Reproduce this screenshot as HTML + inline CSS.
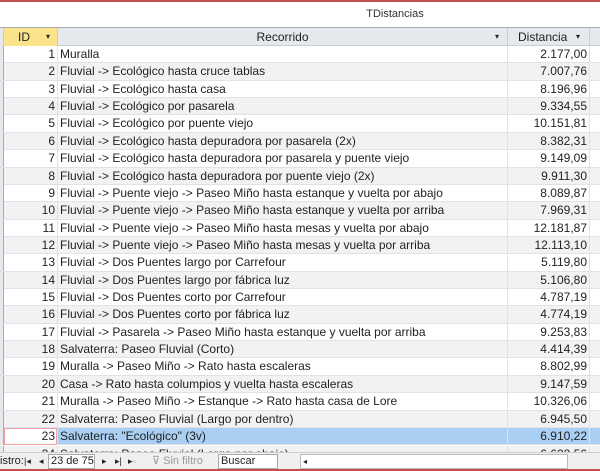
<!DOCTYPE html>
<html><head><meta charset="utf-8"><style>
*{margin:0;padding:0;box-sizing:border-box}
body{width:600px;height:471px;overflow:hidden;background:#fff;font-family:"Liberation Sans",sans-serif;font-size:12px;color:#222;position:relative}
.top{position:absolute;left:0;top:0;width:600px;height:2px;background:#c0504d}
.title{position:absolute;left:0;width:600px;top:8px;text-align:center;padding-left:190px;font-size:11px;color:#333}
.hdr{position:absolute;top:27px;left:0;width:600px;height:19px;background:#e5e8ed;border-top:1px solid #a9adb3;border-bottom:1px solid #c9ced6}
.hdr div{position:absolute;top:0;height:18px;line-height:18px;border-right:1px solid #c9ced6}
.row{position:absolute;left:0;width:600px;height:17.36px;border-bottom:1px solid #dde3ea}
.row div{position:absolute;top:0;height:17px;line-height:17px;white-space:nowrap;overflow:hidden}
.sel{position:absolute;left:0;width:4px;height:17px;background:#e5e8ed;border-right:1px solid #a9adb3}
.id{left:4px;width:54px;text-align:right;padding-right:2px;border-right:1px solid #dde3ea}
.rc{left:58px;width:450px;padding-left:2px;border-right:1px solid #dde3ea}
.ds{left:508px;width:82px;text-align:right;padding-right:2px;border-right:1px solid #dde3ea}
.alt{background:#f2f2f2}
.nav{position:absolute;top:452px;left:0;width:600px;height:17px;background:#f0f0f0;border-top:1px solid #c9ced6;font-size:11px}
.nav span{position:absolute;top:2px;white-space:nowrap;line-height:13px}
.box{top:1px !important;height:15px;background:#fff;border:1px solid #aaa;padding-left:2px}
.bot{position:absolute;left:0;top:469px;width:600px;height:2px;background:#c0504d}
</style></head><body>
<div class="top"></div>
<div class="title">TDistancias</div>
<div class="hdr">
<div style="left:0;width:4px;background:#e5e8ed"></div>
<div style="left:4px;width:54px;background:#fbe38c;padding-left:14px">ID<span style="position:absolute;left:42px;font-size:8px">▾</span></div>
<div style="left:58px;width:450px;text-align:center">Recorrido<span style="position:absolute;left:437px;font-size:8px">▾</span></div>
<div style="left:508px;width:82px;padding-left:10px">Distancia<span style="position:absolute;left:68px;font-size:8px">▾</span></div>
</div>
<div id="rows"></div>
<div class="row" style="top:428px;background:#a9d0f2"><div class="sel"></div><div class="id" style="background:#fff;box-shadow:inset 0 0 0 1px #f0a0a0">23</div><div class="rc">Salvaterra: "Ecológico" (3v)</div><div class="ds">6.910,22</div></div>
<div class="row alt" style="top:446px"><div class="sel"></div><div class="id">24</div><div class="rc">Salvaterra: Paseo Fluvial (Largo por abajo)</div><div class="ds">6.622,56</div></div>
<div class="nav">
<span style="left:0">istro:</span>
<span style="left:24px;font-size:9px">|◂</span>
<span style="left:39px;font-size:9px">◂</span>
<span class="box" style="left:48px;width:47px">23 de 75</span>
<span style="left:102px;font-size:9px">▸</span>
<span style="left:115px;font-size:9px">▸|</span>
<span style="left:128px;font-size:9px">▸<b style="color:#e8b000">▫</b></span>
<span style="left:152px;color:#999">⊽ Sin filtro</span>
<span class="box" style="left:218px;width:60px">Buscar</span>
<span class="box" style="left:300px;width:268px;font-size:8px;border-color:#bbb">◂</span>
</div>
<div class="bot"></div>
<script>
var d=[["Muralla","2.177,00"],["Fluvial -> Ecológico hasta cruce tablas","7.007,76"],["Fluvial -> Ecológico hasta casa","8.196,96"],["Fluvial -> Ecológico por pasarela","9.334,55"],["Fluvial -> Ecológico por puente viejo","10.151,81"],["Fluvial -> Ecológico hasta depuradora por pasarela (2x)","8.382,31"],["Fluvial -> Ecológico hasta depuradora por pasarela y puente viejo","9.149,09"],["Fluvial -> Ecológico hasta depuradora por puente viejo (2x)","9.911,30"],["Fluvial -> Puente viejo -> Paseo Miño hasta estanque y vuelta por abajo","8.089,87"],["Fluvial -> Puente viejo -> Paseo Miño hasta estanque y vuelta por arriba","7.969,31"],["Fluvial -> Puente viejo -> Paseo Miño hasta mesas y vuelta por abajo","12.181,87"],["Fluvial -> Puente viejo -> Paseo Miño hasta mesas y vuelta por arriba","12.113,10"],["Fluvial -> Dos Puentes largo por Carrefour","5.119,80"],["Fluvial -> Dos Puentes largo por fábrica luz","5.106,80"],["Fluvial -> Dos Puentes corto por Carrefour","4.787,19"],["Fluvial -> Dos Puentes corto por fábrica luz","4.774,19"],["Fluvial -> Pasarela -> Paseo Miño hasta estanque y vuelta por arriba","9.253,83"],["Salvaterra: Paseo Fluvial (Corto)","4.414,39"],["Muralla -> Paseo Miño -> Rato hasta escaleras","8.802,99"],["Casa -> Rato hasta columpios y vuelta hasta escaleras","9.147,59"],["Muralla -> Paseo Miño -> Estanque -> Rato hasta casa de Lore","10.326,06"],["Salvaterra: Paseo Fluvial (Largo por dentro)","6.945,50"]];
var h="";d.forEach(function(r,i){h+='<div class="row'+(i%2?' alt':'')+'" style="top:'+(46+i*17.36).toFixed(2)+'px"><div class="sel"></div><div class="id">'+(i+1)+'</div><div class="rc">'+r[0].replace(/>/g,"&gt;")+'</div><div class="ds">'+r[1]+'</div></div>';});
document.getElementById("rows").innerHTML=h;
</script>
</body></html>
